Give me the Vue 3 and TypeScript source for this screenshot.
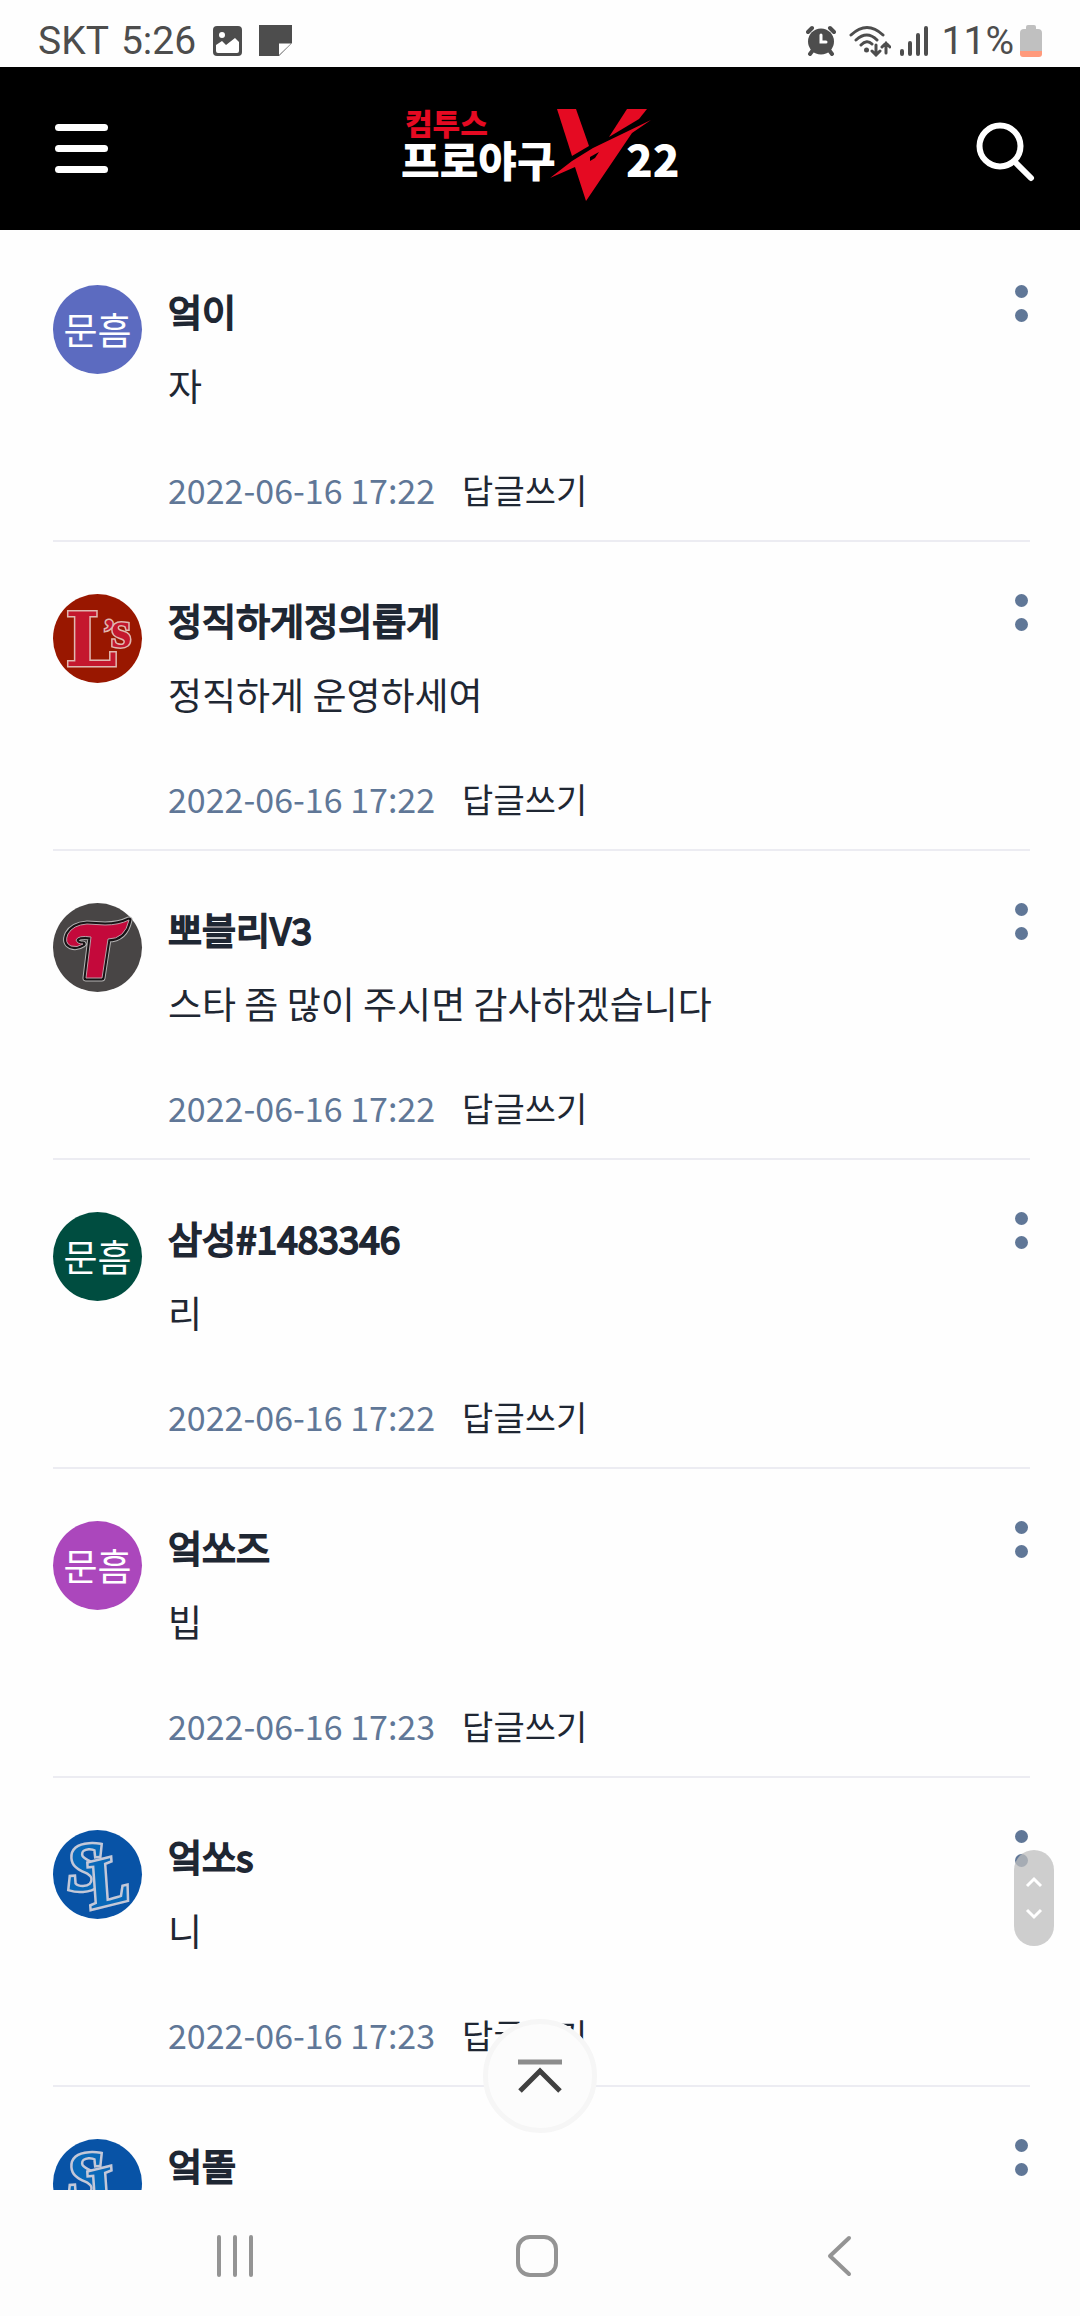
<script setup lang="ts">
type Team = 'twins' | 'tigers' | 'lions'

interface Comment {
  id: number
  name: string
  text: string
  date: string
  color: string
  label?: string
  team?: Team
}

const comments: Comment[] = [
  { id: 1, name: '엌이', text: '자', date: '2022-06-16 17:22', color: '#5c6bc0', label: '문흠' },
  { id: 2, name: '정직하게정의롭게', text: '정직하게 운영하세여', date: '2022-06-16 17:22', color: '#991700', team: 'twins' },
  { id: 3, name: '뽀블리V3', text: '스타 좀 많이 주시면 감사하겠습니다', date: '2022-06-16 17:22', color: '#484545', team: 'tigers' },
  { id: 4, name: '삼성#1483346', text: '리', date: '2022-06-16 17:22', color: '#004d40', label: '문흠' },
  { id: 5, name: '엌쏘즈', text: '빕', date: '2022-06-16 17:23', color: '#ab47bc', label: '문흠' },
  { id: 6, name: '엌쏘s', text: '니', date: '2022-06-16 17:23', color: '#0853a6', team: 'lions' },
  { id: 7, name: '엌똘', text: '', date: '2022-06-16 17:23', color: '#0853a6', team: 'lions' },
]

const tigerMark =
  'M76 17Q66 22 52 22L34 21Q20 22 15 31Q11 40 18 43Q24 45 30 41Q24 41 23 37Q25 32 38 34L33 75H49L55 36Q72 36 76 17Z'
</script>

<template>
  <div class="screen">
    <div class="status">
      <span>SKT</span>
      <span class="clock">5:26</span>
      <svg class="picture" width="29" height="30" viewBox="0 0 29 30">
        <rect width="29" height="30" rx="4" fill="#4d4d4d" />
        <circle cx="9" cy="9" r="3" fill="#fff" />
        <path d="M3 19L9 15L13 19L22 12L26 16V25Q26 27 24 27H5Q3 27 3 25Z" fill="#fff" />
      </svg>
      <svg class="note" width="33" height="31" viewBox="0 0 33 31">
        <path d="M0 0H33V18L20 31H0Z" fill="#4d4d4d" />
        <path d="M20 18.500H32L20 30Z" fill="#fff" />
      </svg>
      <span class="spacer"></span>
      <svg class="alarm" width="30" height="31" viewBox="0 0 30 31">
        <g stroke="#4d4d4d" stroke-width="4" stroke-linecap="round">
          <path d="M2 7L6 3M28 7L24 3M7 25L4 29M23 25L26 29" />
        </g>
        <circle cx="15" cy="16.500" r="13" fill="#4d4d4d" />
        <path d="M15 10V17H20" fill="none" stroke="#fff" stroke-width="3" stroke-linecap="round" />
      </svg>
      <svg class="wifi" width="42" height="32" viewBox="0 0 42 32">
        <g fill="none" stroke="#4d4d4d" stroke-width="3" stroke-linecap="round">
          <path d="M2 10Q18 -5 34 10M7 15Q18 5 28 15M12 20Q18 14 23 19" />
          <path d="M27 20V30M23 26L27 30L31 26M37 28V18M33 22L37 18L41 22" />
        </g>
        <circle cx="17.500" cy="25" r="2.500" fill="#4d4d4d" />
      </svg>
      <svg class="signal" width="28" height="30" viewBox="0 0 28 30">
        <path d="M2 25V28M10 17V28M18 9V28M26 2V28" stroke="#4d4d4d" stroke-width="4" stroke-linecap="round" />
      </svg>
      <span class="percent">11%</span>
      <svg width="22" height="34" viewBox="0 0 22 34">
        <path d="M6 3Q6 1 8 1H14Q16 1 16 3V5H18Q22 5 22 9V28H0V9Q0 5 4 5H6Z" fill="#c0c0c0" />
        <path d="M0 27H22V30Q22 33 19 33H3Q0 33 0 30Z" fill="#ff9a7c" />
      </svg>
    </div>

    <header class="header">
      <button class="menu" type="button" aria-label="메뉴"><i></i><i></i><i></i></button>
      <a class="logo" href="#">
        <svg width="280" height="114" viewBox="2 -8 280 114">
          <text class="brand" x="5" y="35" fill="#e50a22">컴투스</text>
          <text class="title" x="1" y="77" fill="#fff">프로야구</text>
          <g fill="#e50a22">
            <path d="M157 9H176L189 46L172 56Z" />
            <path d="M227 9H247L239 19L209 37Z" />
            <path d="M251 20L232 33L186 101L175 67L150 78L172 61L193 48Z" />
          </g>
          <path d="M190 57L199 52L195 58L190 61Z" fill="#000" />
          <text class="number" x="226" y="77" fill="#fff">22</text>
        </svg>
      </a>
      <button class="search" type="button" aria-label="검색">
        <svg width="60" height="68" viewBox="0 -6 60 68">
          <g fill="none" stroke="#fff" stroke-width="6" stroke-linecap="round">
            <circle cx="24" cy="25" r="20.500" />
            <path d="M39 41L55 57" />
          </g>
        </svg>
      </button>
    </header>

    <main class="content">
      <ul class="list">
        <li v-for="c in comments" :key="c.id" class="comment">
          <div class="avatar" :style="{ background: c.color }">
            <span v-if="c.label">{{ c.label }}</span>
            <svg v-else width="89" height="89" viewBox="0 0 89 89">
              <g v-if="c.team === 'twins'" class="twins">
                <text class="big" x="12" y="72">L</text>
                <text class="small" x="58" y="53">s</text>
                <text class="tick" x="50" y="50">’</text>
              </g>
              <g v-else-if="c.team === 'tigers'" stroke-linejoin="round">
                <path :d="tigerMark" fill="none" stroke="#b5b5b5" stroke-width="7" />
                <path :d="tigerMark" fill="none" stroke="#171315" stroke-width="5" />
                <path :d="tigerMark" fill="#c4093b" stroke="#b9a0a8" stroke-width="1" />
              </g>
              <g v-else class="lions">
                <text x="14" y="60" transform="rotate(-4 30 40)">S</text>
                <text x="34" y="74" transform="rotate(-14 55 55)">L</text>
              </g>
            </svg>
          </div>
          <div class="body">
            <strong class="name">{{ c.name }}</strong>
            <p class="text">{{ c.text }}</p>
            <div class="meta">
              <time>{{ c.date }}</time>
              <button class="reply" type="button">답글쓰기</button>
            </div>
          </div>
          <button class="more" type="button" aria-label="더보기"><i></i><i></i></button>
        </li>
      </ul>

      <button class="top" type="button" aria-label="맨 위로">
        <svg width="46" height="36" viewBox="0 0 46 36">
          <path d="M1 4H45" stroke="#8c8c8c" stroke-width="5" />
          <path d="M3 33L23 13L43 33" fill="none" stroke="#404040" stroke-width="5" />
        </svg>
      </button>
      <div class="thumb">
        <svg width="18" height="44" viewBox="0 0 18 44">
          <path d="M2 10L9 3L16 10M2 34L9 41L16 34" fill="none" stroke="#fff" stroke-width="3" />
        </svg>
      </div>
    </main>

    <nav class="nav">
      <button type="button" aria-label="최근 앱">
        <svg width="42" height="42" viewBox="0 0 42 42">
          <path d="M5 2V40M21 2V40M37 2V40" stroke="#949494" stroke-width="4" stroke-linecap="round" />
        </svg>
      </button>
      <button type="button" aria-label="홈">
        <svg width="42" height="42" viewBox="0 0 42 42">
          <rect x="2" y="2" width="38" height="38" rx="12" fill="none" stroke="#949494" stroke-width="4" />
        </svg>
      </button>
      <button type="button" aria-label="뒤로">
        <svg width="42" height="42" viewBox="0 0 42 42">
          <path d="M31 3L12 21L31 39" fill="none" stroke="#949494" stroke-width="4" stroke-linecap="round" stroke-linejoin="round" />
        </svg>
      </button>
    </nav>
  </div>
</template>

<style>
body {
  margin: 0;
  background: #fefefe;
}
</style>

<style scoped>
.screen {
  display: flex;
  flex-direction: column;
  height: 100vh;
  color: #1f2733;
  font-family: "Noto Sans CJK KR", sans-serif;
}

svg {
  display: block;
  flex: none;
}

button {
  margin: 0;
  padding: 0;
  border: 0;
  background: none;
  color: inherit;
  font: inherit;
  cursor: pointer;
}

.status {
  display: flex;
  align-items: center;
  flex: none;
  box-sizing: border-box;
  height: 67px;
  padding: 14px 38px 0 38px;
  color: #4d4d4d;
  font: 39px/46px Roboto, sans-serif;
}

.clock {
  margin-left: 12px;
}

.picture {
  margin-left: 17px;
}

.note {
  margin-left: 17px;
}

.spacer {
  flex: 1;
}

.wifi {
  margin-left: 13px;
}

.signal {
  margin-left: 9px;
}

.percent {
  margin: 0 6px 0 14px;
}

.header {
  display: flex;
  align-items: center;
  justify-content: space-between;
  flex: none;
  height: 163px;
  padding: 0 44px 0 55px;
  background: #000;
}

.menu {
  display: flex;
  flex-direction: column;
  gap: 14px;
  width: 53px;
}

.menu i {
  height: 7px;
  border-radius: 4px;
  background: #fff;
}

.logo text {
  font-weight: 900;
}

.brand {
  font-size: 30px;
}

.title {
  font-size: 42px;
}

.number {
  font-size: 44px;
}

.content {
  position: relative;
  flex: 1;
  min-height: 0;
  overflow: hidden;
}

.list {
  margin: 0;
  padding: 3px 50px 0 53px;
  list-style: none;
}

.comment {
  display: flex;
  align-items: flex-start;
  padding: 52px 0 24px;
  border-bottom: 2px solid #ececf2;
}

.avatar {
  display: flex;
  align-items: center;
  justify-content: center;
  flex: none;
  width: 89px;
  height: 89px;
  border-radius: 50%;
  color: #fff;
  font-size: 37px;
  line-height: 54px;
}

.avatar span {
  padding-bottom: 2px;
}

.twins {
  fill: #c4182e;
  stroke: #e0b8b0;
  stroke-width: 3px;
  paint-order: stroke;
  font-family: "Liberation Serif", serif;
  font-weight: 700;
}

.big {
  font-family: "DejaVu Serif", serif;
  font-size: 74px;
}

.small {
  font-size: 52px;
}

.tick {
  font-size: 36px;
}

.lions {
  fill: #0868b8;
  stroke: #c3c8d8;
  stroke-width: 5px;
  paint-order: stroke;
  font: italic 700 68px "Liberation Serif", serif;
}

.body {
  flex: 1;
  min-width: 0;
  margin-left: 26px;
}

.name {
  display: block;
  font-size: 37px;
  font-weight: 400;
  line-height: 52px;
  -webkit-text-stroke: 2px currentColor;
}

.text {
  min-height: 54px;
  margin: 21px 0 52px;
  font-size: 37px;
  line-height: 54px;
}

.meta {
  display: flex;
  gap: 27px;
  font-size: 34px;
  line-height: 52px;
}

.meta time {
  color: #607797;
}

.more {
  display: flex;
  flex-direction: column;
  gap: 11px;
  margin-right: 2px;
}

.more i {
  width: 13px;
  height: 13px;
  border-radius: 50%;
  background: #607797;
}

.top {
  position: absolute;
  bottom: 57px;
  left: 50%;
  display: flex;
  align-items: center;
  justify-content: center;
  box-sizing: border-box;
  width: 114px;
  height: 114px;
  border: 5px solid #f6f6f6;
  border-radius: 50%;
  background: #fcfcfc;
  transform: translateX(-50%);
}

.thumb {
  position: absolute;
  right: 26px;
  bottom: 244px;
  display: flex;
  align-items: center;
  justify-content: center;
  width: 40px;
  height: 96px;
  border-radius: 20px;
  background: rgba(190, 190, 190, 0.75);
}

.nav {
  display: flex;
  align-items: center;
  justify-content: space-around;
  flex: none;
  box-sizing: border-box;
  height: 126px;
  padding: 6px 90px 0 84px;
  background: #fdfdfd;
}
</style>
